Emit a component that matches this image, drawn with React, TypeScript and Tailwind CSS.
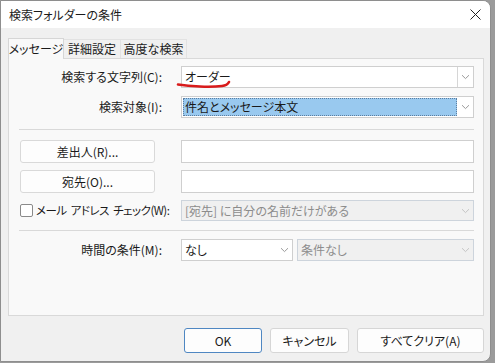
import React from 'react'

const font = { fontFamily: '"Noto Sans CJK JP", "Noto Sans", sans-serif' }

function Chevron({ color = '#9a9a9a' }: { color?: string }): React.JSX.Element {
  return (
    <svg width="9" height="6" viewBox="0 0 9 6" fill="none">
      <path d="M1 1.2 L4.5 4.6 L8 1.2" stroke={color} strokeWidth="1" />
    </svg>
  )
}

function DialogButton({ label, primary }: { label: string; primary?: boolean }): React.JSX.Element {
  return (
    <button
      type="button"
      className={`h-[25px] rounded-[3px] bg-[#fdfdfd] text-[12px] text-[#1a1a1a] ${
        primary ? 'border border-[#4f87c2]' : 'border border-[#d6d6d6]'
      }`}
    >
      {label}
    </button>
  )
}

export default function App(): React.JSX.Element {
  return (
    <div className="w-[495px] h-[363px] bg-[#9b9b9b] overflow-hidden [font-feature-settings:'palt']" style={font}>
      <div className="w-[491px] h-[362px] flex flex-col border border-[#8e8e8e] rounded-br-[8px] rounded-tr-[8px] overflow-hidden bg-[#f0f0f0]">
        {/* Title bar */}
        <div className="h-[27px] bg-white flex items-center justify-between pl-[8px] pr-[9px] shrink-0">
          <span className="text-[12px] text-[#1a1a1a]">検索フォルダーの条件</span>
          <svg width="11" height="11" viewBox="0 0 11 11">
            <path d="M0.5 0.5 L10.5 10.5 M10.5 0.5 L0.5 10.5" stroke="#222" strokeWidth="1" />
          </svg>
        </div>

        <div className="flex flex-col pl-[7px] pr-[6px] pt-[9px]">
          {/* Tabs */}
          <div className="flex items-end h-[21px] text-[12px] text-[#1a1a1a] whitespace-nowrap">
            <div className="h-[21px] w-[56px] flex items-center justify-center bg-[#f9f9f9] border border-b-0 border-[#d6d6d6] relative z-10 -mb-px pb-px">
              メッセージ
            </div>
            <div className="h-[19px] w-[57px] flex items-center justify-center border-t border-r border-[#e2e2e2]">
              詳細設定
            </div>
            <div className="h-[19px] w-[66px] flex items-center justify-center border-t border-r border-[#e2e2e2]">
              高度な検索
            </div>
          </div>

          {/* Panel */}
          <div className="h-[258px] bg-[#f9f9f9] border border-[#d9d9d9] pl-[10px] pr-[9px] pt-[7px] text-[12px] text-[#1a1a1a]">
            <div className="grid grid-cols-[161px_1fr] gap-x-[1px] items-center gap-y-[8px]">
              <div className="text-right pr-[18px] whitespace-nowrap">検索する文字列(C):</div>
              <div className="relative h-[22px] bg-white border border-[#cfcfcf] flex items-center">
                <span className="pl-[3px] flex-1">オーダー</span>
                <div className="w-[16px] h-[20px] border-l border-[#d6d6d6] flex items-center justify-center">
                  <Chevron />
                </div>
                <svg className="absolute left-[-6px] top-[12px]" width="56" height="10" viewBox="0 0 56 10" fill="none">
                  <path d="M2 5.5 C14 7.5 34 8.5 46 7 C50 6.5 52 5 53 3" stroke="#d81b1b" strokeWidth="2.6" strokeLinecap="round" />
                </svg>
              </div>

              <div className="text-right pr-[18px] whitespace-nowrap">検索対象(I):</div>
              <div className="h-[22px] bg-white border border-[#cfcfcf] flex items-center">
                <span className="flex-1 h-[18px] ml-[1px] bg-[#99c9ef] border border-dotted border-[#5d7ea0] flex items-center pl-[1px] leading-none">
                  件名とメッセージ本文
                </span>
                <div className="w-[16px] flex items-center justify-center">
                  <Chevron />
                </div>
              </div>
            </div>

            <div className="h-px bg-[#d9d9d9] mt-[11px] mb-[10px]" />

            <div className="grid grid-cols-[161px_1fr] gap-x-[1px] items-center gap-y-[7px]">
              <div className="pr-[7px]">
                <button type="button" className="w-[135px] h-[23px] bg-[#fdfdfd] border border-[#d9d9d9] rounded-[3px] ml-px">
                  差出人(R)...
                </button>
              </div>
              <div className="h-[23px] bg-white border border-[#cfcfcf]" />

              <div className="pr-[7px]">
                <button type="button" className="w-[135px] h-[23px] bg-[#fdfdfd] border border-[#d9d9d9] rounded-[3px] ml-px">
                  宛先(O)...
                </button>
              </div>
              <div className="h-[23px] bg-white border border-[#cfcfcf]" />

              <div className="flex items-center gap-[3px] whitespace-nowrap ml-px">
                <span className="w-[13px] h-[13px] border border-[#8a8a8a] rounded-[2px] bg-white shrink-0" />
                <span className="text-[11.5px] tracking-[-0.5px] [word-spacing:2px]">メール アドレス チェック(W):</span>
              </div>
              <div className="h-[21px] bg-[#f0f0f0] border border-[#cdd4dc] flex items-center text-[#8c8c8c]">
                <span className="flex-1 pl-[3px]">[宛先] に自分の名前だけがある</span>
                <div className="w-[16px] flex items-center justify-center">
                  <Chevron color="#c4c4c4" />
                </div>
              </div>
            </div>

            <div className="h-px bg-[#d9d9d9] mt-[9px] mb-[8px]" />

            <div className="grid grid-cols-[161px_1fr] gap-x-[1px] items-center">
              <div className="text-right pr-[18px] whitespace-nowrap">時間の条件(M):</div>
              <div className="flex gap-[4px]">
                <div className="w-[112px] h-[22px] bg-white border border-[#cfcfcf] flex items-center">
                  <span className="flex-1 pl-[3px]">なし</span>
                  <div className="w-[16px] flex items-center justify-center">
                    <Chevron />
                  </div>
                </div>
                <div className="flex-1 h-[22px] bg-[#f0f0f0] border border-[#cdd4dc] flex items-center text-[#8c8c8c]">
                  <span className="flex-1 pl-[3px]">条件なし</span>
                  <div className="w-[16px] flex items-center justify-center">
                    <Chevron color="#c4c4c4" />
                  </div>
                </div>
              </div>
            </div>
          </div>

          {/* Footer buttons */}
          <div className="flex justify-end gap-[8px] mt-[12px]">
            <div className="w-[78px] flex flex-col">
              <DialogButton label="OK" primary />
            </div>
            <div className="w-[79px] flex flex-col">
              <DialogButton label="キャンセル" />
            </div>
            <div className="w-[127px] flex flex-col">
              <DialogButton label="すべてクリア(A)" />
            </div>
          </div>
        </div>
      </div>
    </div>
  )
}
